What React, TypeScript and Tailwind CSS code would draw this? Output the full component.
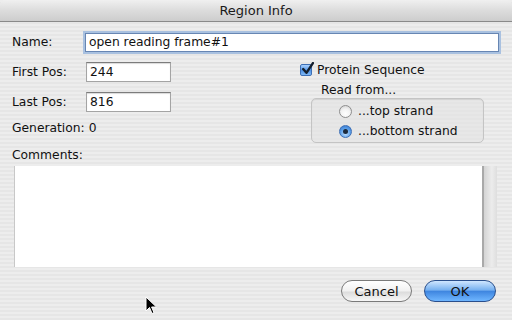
import React from 'react'

const font = "font-['DejaVu_Sans',sans-serif]"

const Field = ({ label, value }: { label: string; value: string }) => (
  <div className="flex items-center h-[20px]">
    <span className="w-[74px]">{label}</span>
    <div className="w-[85px] h-[20px] bg-white border border-[#a4a4a4] border-t-[#7c7c7c] shadow-[inset_0_1px_1px_rgba(0,0,0,0.15)] flex items-center pl-[3px]">
      {value}
    </div>
  </div>
)

const Radio = ({ checked, label }: { checked?: boolean; label: string }) => (
  <div className="flex items-center h-[20px]">
    {checked ? (
      <div className="w-[13px] h-[13px] rounded-full border border-[#3d6fb5] bg-[radial-gradient(circle_at_50%_70%,#bfe0ff_0%,#5a9ee8_55%,#2f6fc8_100%)] flex items-center justify-center">
        <div className="w-[5px] h-[5px] rounded-full bg-[#1c2b3d]" />
      </div>
    ) : (
      <div className="w-[13px] h-[13px] rounded-full border border-[#8e8e8e] bg-[radial-gradient(circle_at_50%_70%,#ffffff_0%,#f2f2f2_50%,#c9c9c9_100%)]" />
    )}
    <span className="ml-[6px]">{label}</span>
  </div>
)

const Checkbox = () => (
  <div className="w-[12px] h-[12px] rounded-[2px] border border-[#3d6fb5] bg-[linear-gradient(#a9d1ff,#4f93e6_55%,#7fb8f5)] relative">
    <svg viewBox="0 0 12 12" className="absolute -top-[3px] left-[0px] w-[13px] h-[13px]">
      <path d="M2 6.5 L5 10 L11 1" fill="none" stroke="#15202e" strokeWidth="2.2" strokeLinecap="round" strokeLinejoin="round" />
    </svg>
  </div>
)

export default function App() {
  return (
    <div
      className={`${font} relative w-[512px] h-[320px] overflow-hidden text-[12.3px] leading-[15px] text-[#111] bg-[repeating-linear-gradient(180deg,#ededed_0px,#ededed_2px,#e6e6e6_2px,#e6e6e6_4px)]`}
    >
      <div className="h-[22px] flex items-center justify-center border-b border-[#8a8a8a] rounded-t-[5px] bg-[linear-gradient(#f0f0f0,#dcdcdc_50%,#cdcdcd)] text-[13px] text-[#1a1a1a]">
        Region Info
      </div>

      <div className="px-[12px]">
        <div className="flex items-center mt-[10px] h-[20px]">
          <span className="w-[73px]">Name:</span>
          <div className="w-[414px] h-[19px] bg-white border border-[#6786b3] shadow-[0_0_0_2px_#a9c1e0] flex items-center pl-[3px]">
            open reading frame#1
          </div>
        </div>

        <div className="flex mt-[10px]">
          <div className="flex flex-col">
            <Field label="First Pos:" value="244" />
            <div className="mt-[10px]">
              <Field label="Last Pos:" value="816" />
            </div>
            <div className="mt-[9px]">Generation: 0</div>
          </div>

          <div className="ml-[129px] flex flex-col">
            <div className="flex items-center h-[16px]">
              <Checkbox />
              <span className="ml-[5px]">Protein Sequence</span>
            </div>
            <div className="h-[16px] mt-[4px] flex items-center pl-[21px]">Read from...</div>
            <div className="ml-[11px] w-[173px] h-[45px] rounded-[5px] border border-[#c4c4c4] bg-[#e3e3e3]/60 shadow-[inset_0_1px_1px_rgba(0,0,0,0.08)] pt-[2px] pl-[27px]">
              <Radio label="...top strand" />
              <Radio checked label="...bottom strand" />
            </div>
          </div>
        </div>

        <div className="mt-[5px]">Comments:</div>

        <div className="ml-[2px] mt-[3px] w-[483px] h-[101px] flex border-l border-[#c8c8c8]">
          <div className="flex-1 bg-white" />
          <div className="w-[15px] border-l-2 border-[#a9a9a9] bg-[linear-gradient(90deg,#d4d4d4,#ececec_60%,#dedede)]" />
        </div>

        <div className="flex justify-end gap-[12px] pr-[4px] mt-[13px]">
          <div className="w-[71px] h-[22px] rounded-full border border-[#7a7a7a] bg-[linear-gradient(#ffffff,#f1f1f1_50%,#dcdcdc_55%,#f7f7f7)] flex items-center justify-center text-[13px]">
            Cancel
          </div>
          <div className="w-[72px] h-[22px] rounded-full border border-[#2a4f8c] bg-[linear-gradient(#cfe6ff,#77b1f0_45%,#3f86e0_52%,#6fb6ff)] flex items-center justify-center text-[13px]">
            OK
          </div>
        </div>
      </div>

      <svg className="absolute left-[145px] top-[296px] w-[13px] h-[20px]" viewBox="0 0 13 20">
        <path d="M1 1 L1 15 L4.5 11.5 L7 17.5 L9 16.6 L6.6 11 L11.5 11 Z" fill="#000" stroke="#fff" strokeWidth="1" />
      </svg>
    </div>
  )
}
